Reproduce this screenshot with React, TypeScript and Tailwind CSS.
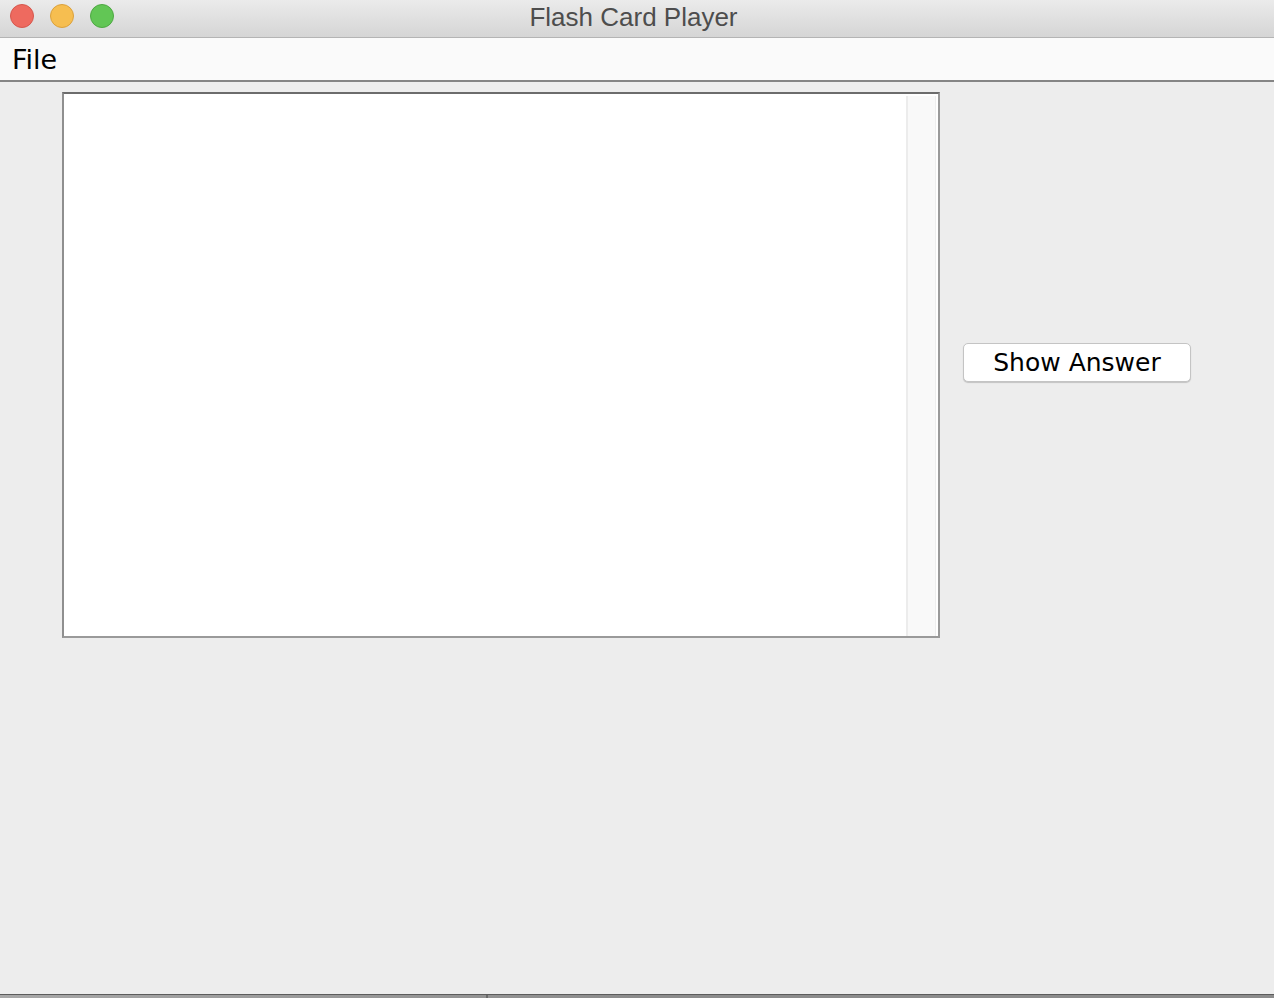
import React from "react";

export default function App() {
  return (
    <div className="w-[1274px] h-[998px] flex flex-col bg-[#ededed] overflow-hidden">
      {/* Title bar */}
      <div className="relative h-[38px] shrink-0 bg-gradient-to-b from-[#ebebeb] to-[#d5d5d5] border-b border-[#b4b4b4] flex items-center justify-center pr-[7px]">
        <div className="absolute left-[10px] top-[4px] flex gap-[16px]">
          <div className="w-[24px] h-[24px] rounded-full bg-[#ee6a5f] border border-[#d6574d]" />
          <div className="w-[24px] h-[24px] rounded-full bg-[#f6be50] border border-[#dba13c]" />
          <div className="w-[24px] h-[24px] rounded-full bg-[#62c655] border border-[#4ea843]" />
        </div>
        <span className="text-[26px] leading-none text-[#4d4d4d] font-['Liberation_Sans',Arial,sans-serif] -mt-[4px]">
          Flash Card Player
        </span>
      </div>
      {/* Menu bar */}
      <div className="h-[44px] shrink-0 bg-[#fafafa] border-b-2 border-[#858585] flex items-center px-[12px]">
        <span className="text-[27px] leading-none text-black font-['DejaVu_Sans',sans-serif] mt-[1px]">
          File
        </span>
      </div>
      {/* Content */}
      <div className="flex-1 flex items-start pt-[10px] pl-[62px]">
        <div className="flex items-center gap-[23px]">
          <div className="w-[878px] h-[546px] bg-white border-t-2 border-l-2 border-t-[#6c6c6c] border-l-[#8f8f8f] border-r-2 border-b-2 border-r-[#9a9a9a] border-b-[#9a9a9a] flex justify-end pt-[2px] pr-[2px]">
            <div className="w-[30px] h-full bg-[#f9f9f9] border-l-2 border-[#ececec] border-r border-r-[#eeeeee]" />
          </div>
          <button className="w-[228px] h-[39px] -mt-[5px] bg-white rounded-[5px] border border-[#c4c4c4] shadow-[0_1px_1px_rgba(0,0,0,0.18)] text-[25px] leading-none text-black font-['DejaVu_Sans',sans-serif] flex items-center justify-center">
            Show Answer
          </button>
        </div>
      </div>
      {/* Bottom edge */}
      <div className="h-[4px] shrink-0 border-t border-[#5c5c5c] bg-gradient-to-r from-[#a8a8a8] via-[#8c8c8c] to-[#8c8c8c] relative">
        <div className="absolute left-[486px] top-0 w-[2px] h-full bg-[#6a6a6a]" />
      </div>
    </div>
  );
}
